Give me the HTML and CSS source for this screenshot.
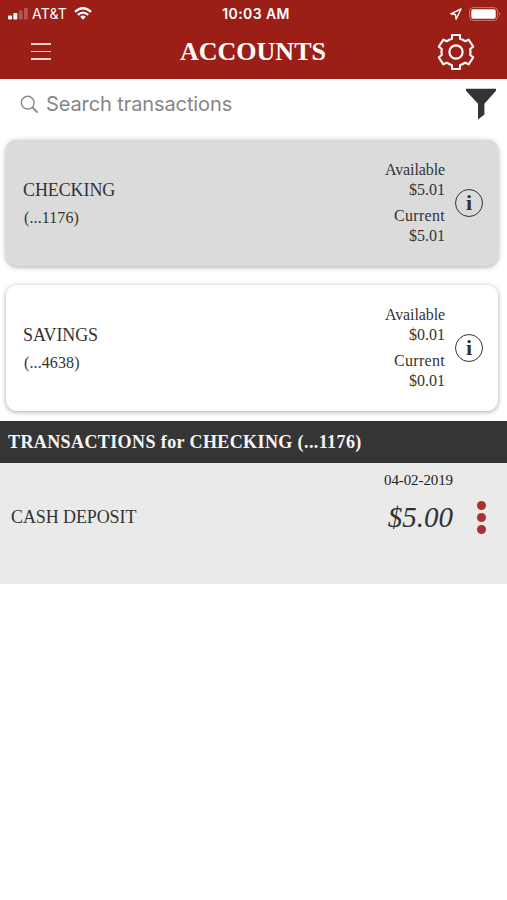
FILE: index.html
```html
<!DOCTYPE html>
<html lang="en">
<head>
    <meta charset="UTF-8">
    <meta name="viewport" content="width=device-width, initial-scale=1.0">
    <title>Accounts</title>
    <link rel="stylesheet" href="styles.css">
</head>
<body>
    <header>
        <div class="status-bar">
            <div class="carrier">
                <svg width="20" height="12" viewBox="0 0 20 12" fill="#fff">
                    <rect x="0" y="7.5" width="4" height="4" rx="1"/>
                    <rect x="5.3" y="5" width="4" height="6.5" rx="1"/>
                    <rect x="10.8" y="2.5" width="3.8" height="9" rx="1" opacity=".25"/>
                    <rect x="16" y="0" width="3.8" height="11.5" rx="1" opacity=".25"/>
                </svg>
                <span class="carrier-name">AT&amp;T</span>
                <svg width="18" height="13" viewBox="0 0 18 13" fill="none" stroke="#fff" stroke-width="2.3">
                    <path d="M1 4.8Q9-2.4 17 4.8"/>
                    <path d="M3.9 7.9Q9 3.3 14.1 7.9"/>
                    <path d="M6.2 9.8Q9 7.4 11.8 9.8L9 12.7z" fill="#fff" stroke="none"/>
                </svg>
            </div>
            <span class="time">10:03 AM</span>
            <div class="battery">
                <svg width="12" height="12" viewBox="0 0 12 12" fill="none" stroke="#fff" stroke-width="1.4" stroke-linejoin="round">
                    <path d="M11 1L.8 5.8l4.7.7.6 4.7z"/>
                </svg>
                <svg width="32" height="14" viewBox="0 0 32 14">
                    <rect x=".6" y=".6" width="28" height="12.8" rx="3.5" fill="none" stroke="#fff" stroke-opacity=".4"/>
                    <rect x="2.3" y="2.3" width="24.4" height="9.4" rx="1.8" fill="#fff"/>
                    <path d="M30 5q2 2 0 4z" fill="#fff" opacity=".45"/>
                </svg>
            </div>
        </div>
        <div class="title-bar">
            <div class="menu"><span></span><span></span><span></span></div>
            <h1>ACCOUNTS</h1>
            <svg class="gear" width="38" height="38" viewBox="0 0 38 38" fill="none" stroke="#fff" stroke-width="2.1" stroke-linejoin="round">
                <path d="M15 2h8v3.8q3 .8 5.2 2.5l3.4-1.6 4.6 6.9-3 2.4q.7 3 0 6l3 2.4-4.6 6.9-3.4-1.6q-2.2 1.7-5.2 2.5V36h-8v-3.8q-3-.8-5.2-2.5l-3.4 1.6-4.6-6.9 3-2.4q-.7-3 0-6l-3-2.4 4.6-6.9 3.4 1.6Q12 6.6 15 5.8z"/>
                <circle cx="19" cy="19" r="6.6"/>
            </svg>
        </div>
    </header>

    <div class="search">
        <svg width="19" height="19" viewBox="0 0 19 19" fill="none" stroke="#8b8b8b" stroke-width="1.5">
            <circle cx="7.7" cy="7.7" r="6.4"/>
            <path d="M12.3 12.3l5.3 5.3" stroke-width="2"/>
        </svg>
        <span class="placeholder">Search transactions</span>
        <svg width="32" height="32" viewBox="0 0 32 32" fill="#333">
            <path d="M1 .8h30v1.9L19.4 15.7v10.8L13 31.6V15.7L1 2.7z"/>
        </svg>
    </div>

    <!-- Accounts -->
    <div class="card selected">
        <div class="account">
            <div class="name">CHECKING</div>
            <div class="number">(...1176)</div>
        </div>
        <div class="balance">
            <div class="avail">Available</div>
            <div>$5.01</div>
            <div class="current">Current</div>
            <div>$5.01</div>
        </div>
        <div class="info">i</div>
    </div>
    <div class="card">
        <div class="account">
            <div class="name">SAVINGS</div>
            <div class="number">(...4638)</div>
        </div>
        <div class="balance">
            <div class="avail">Available</div>
            <div>$0.01</div>
            <div class="current">Current</div>
            <div>$0.01</div>
        </div>
        <div class="info">i</div>
    </div>

    <!-- Transactions -->
    <h2>TRANSACTIONS for CHECKING (...1176)</h2>
    <div class="transaction">
        <div class="description">CASH DEPOSIT</div>
        <div class="details">
            <div class="date">04-02-2019</div>
            <div class="amount">$5.00</div>
        </div>
        <div class="more"><span></span><span></span><span></span></div>
    </div>
</body>
</html>
```
FILE: styles.css
```css
* {
    box-sizing: border-box;
}
body {
    margin: 0;
    background: #fff;
    color: #333;
    font-family: "Liberation Serif", serif;
    white-space: nowrap;
}
header {
    height: 79px;
    background: #9c1f17;
    color: #fff;
}
.status-bar {
    display: grid;
    grid-template-columns: 1fr auto 1fr;
    align-items: center;
    height: 27px;
    padding: 0 6px 0 8px;
    font-family: Inter, sans-serif;
    font-size: 14px;
}
.carrier, .battery {
    display: flex;
    align-items: center;
}
.carrier-name {
    margin: 0 7px 0 4px;
    letter-spacing: 0.2px;
}
.time {
    margin-left: 3px;
    font-weight: 600;
    letter-spacing: 0.4px;
}
.battery {
    justify-content: flex-end;
    gap: 7px;
}
.title-bar {
    display: grid;
    grid-template-columns: 1fr auto 1fr;
    align-items: center;
    height: 49px;
    padding: 0 32px 0 31px;
}
.menu {
    display: flex;
    flex-direction: column;
    gap: 6px;
}
.menu span {
    width: 20px;
    height: 1.5px;
    background: #f3d3cd;
}
h1 {
    margin: 0;
    font-size: 26px;
    line-height: 30px;
}
.gear {
    justify-self: end;
}
.search {
    display: flex;
    align-items: center;
    height: 60px;
    padding: 0 10px 10px 20px;
}
.placeholder {
    flex: 1;
    margin-left: 7px;
    color: #868686;
    font-family: Inter, sans-serif;
    font-size: 20px;
    letter-spacing: -0.1px;
}
.card {
    display: flex;
    align-items: center;
    height: 126px;
    margin: 0 9px 19px 6px;
    padding: 0 15px 0 17px;
    border-radius: 11px;
    background: #fff;
    box-shadow: 0 1px 5px rgba(0, 0, 0, 0.35);
}
.card.selected {
    margin-top: 1px;
    background: #dbdbdb;
}
.account {
    flex: 1;
    padding-top: 1px;
}
.name {
    font-size: 18px;
    line-height: 27px;
    letter-spacing: -0.1px;
}
.number {
    padding-left: 1px;
    font-size: 16px;
    line-height: 27px;
    letter-spacing: 0.1px;
}
.balance {
    margin-right: 10px;
    font-size: 16px;
    line-height: 20px;
    text-align: right;
}
.avail {
    letter-spacing: -0.1px;
}
.current {
    margin-top: 6px;
    letter-spacing: 0.3px;
}
.info {
    width: 28px;
    height: 28px;
    border: 1.5px solid #333;
    border-radius: 50%;
    font-size: 22px;
    font-weight: bold;
    line-height: 25px;
    text-align: center;
}
h2 {
    height: 42px;
    margin: -9px 0 0;
    padding-left: 8px;
    background: #353535;
    color: #f5f5f5;
    font-size: 18px;
    line-height: 42px;
    letter-spacing: 0.4px;
}
.transaction {
    display: flex;
    height: 121px;
    padding: 0 21px 0 11px;
    background: #eaeaea;
}
.description {
    flex: 1;
    font-size: 18px;
    line-height: 109px;
    letter-spacing: -0.1px;
}
.details {
    padding-top: 9px;
    text-align: right;
}
.date {
    color: #222;
    font-size: 15px;
    line-height: 17px;
    letter-spacing: -0.1px;
}
.amount {
    font-size: 29px;
    font-style: italic;
    line-height: 57px;
}
.more {
    display: flex;
    flex-direction: column;
    gap: 3px;
    margin: 38px 0 0 24px;
}
.more span {
    width: 9px;
    height: 9px;
    border-radius: 50%;
    background: #ad2f30;
}
```
